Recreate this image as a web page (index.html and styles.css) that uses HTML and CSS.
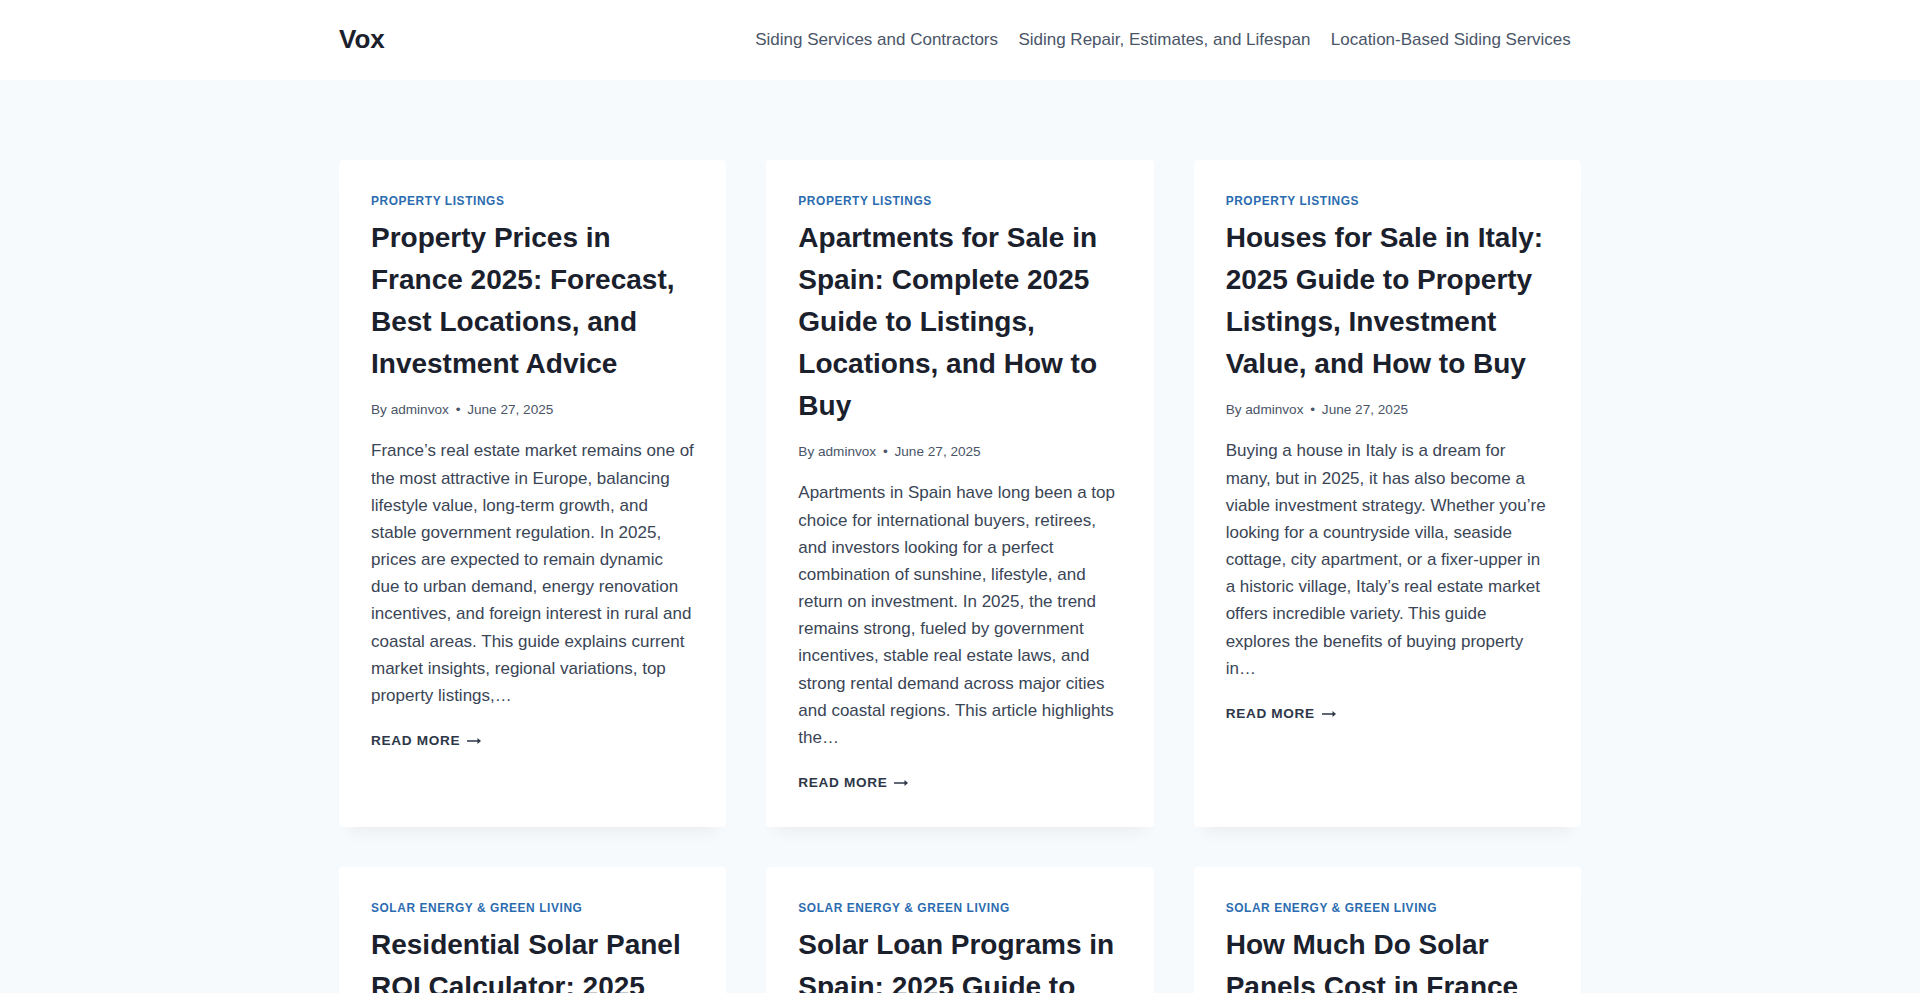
FILE: index.html
```html
<!DOCTYPE html>
<html lang="en">
<head>
<meta charset="utf-8">
<title>Vox</title>
<link rel="stylesheet" href="styles.css">
</head>
<body>
<header class="site-header">
  <div class="container header-inner">
    <a class="site-title" href="#">Vox</a>
    <nav class="main-nav">
      <a href="#">Siding Services and Contractors</a>
      <a href="#">Siding Repair, Estimates, and Lifespan</a>
      <a href="#">Location-Based Siding Services</a>
    </nav>
  </div>
</header>
<main class="site-main">
  <div class="container grid">
    <article class="card">
      <div class="cat"><a href="#">Property Listings</a></div>
      <h2 class="entry-title">Property Prices in France 2025: Forecast, Best Locations, and Investment Advice</h2>
      <div class="meta"><span>By <a href="#">adminvox</a></span><span class="sep">•</span><span>June 27, 2025</span></div>
      <p class="excerpt">France’s real estate market remains one of the most attractive in Europe, balancing lifestyle value, long-term growth, and stable government regulation. In 2025, prices are expected to remain dynamic due to urban demand, energy renovation incentives, and foreign interest in rural and coastal areas. This guide explains current market insights, regional variations, top property listings,…</p>
      <div class="more"><a href="#">Read More<svg class="arrow" viewBox="0 0 14 8" width="14" height="8"><path d="M0 3.3h10.5V1L14 4l-3.5 3V4.7H0z"/></svg></a></div>
    </article>
    <article class="card">
      <div class="cat"><a href="#">Property Listings</a></div>
      <h2 class="entry-title">Apartments for Sale in Spain: Complete 2025 Guide to Listings, Locations, and How to Buy</h2>
      <div class="meta"><span>By <a href="#">adminvox</a></span><span class="sep">•</span><span>June 27, 2025</span></div>
      <p class="excerpt">Apartments in Spain have long been a top choice for international buyers, retirees, and investors looking for a perfect combination of sunshine, lifestyle, and return on investment. In 2025, the trend remains strong, fueled by government incentives, stable real estate laws, and strong rental demand across major cities and coastal regions. This article highlights the…</p>
      <div class="more"><a href="#">Read More<svg class="arrow" viewBox="0 0 14 8" width="14" height="8"><path d="M0 3.3h10.5V1L14 4l-3.5 3V4.7H0z"/></svg></a></div>
    </article>
    <article class="card">
      <div class="cat"><a href="#">Property Listings</a></div>
      <h2 class="entry-title">Houses for Sale in Italy: 2025 Guide to Property Listings, Investment Value, and How to Buy</h2>
      <div class="meta"><span>By <a href="#">adminvox</a></span><span class="sep">•</span><span>June 27, 2025</span></div>
      <p class="excerpt">Buying a house in Italy is a dream for many, but in 2025, it has also become a viable investment strategy. Whether you’re looking for a countryside villa, seaside cottage, city apartment, or a fixer-upper in a historic village, Italy’s real estate market offers incredible variety. This guide explores the benefits of buying property in…</p>
      <div class="more"><a href="#">Read More<svg class="arrow" viewBox="0 0 14 8" width="14" height="8"><path d="M0 3.3h10.5V1L14 4l-3.5 3V4.7H0z"/></svg></a></div>
    </article>
    <article class="card">
      <div class="cat"><a href="#">Solar Energy &amp; Green Living</a></div>
      <h2 class="entry-title">Residential Solar Panel ROI Calculator: 2025 Guide to Savings and Payback</h2>
      <div class="meta"><span>By <a href="#">adminvox</a></span><span class="sep">•</span><span>June 27, 2025</span></div>
      <p class="excerpt">Installing solar panels at home is one of the smartest long-term investments you can make.</p>
    </article>
    <article class="card">
      <div class="cat"><a href="#">Solar Energy &amp; Green Living</a></div>
      <h2 class="entry-title">Solar Loan Programs in Spain: 2025 Guide to Financing Your Installation</h2>
      <div class="meta"><span>By <a href="#">adminvox</a></span><span class="sep">•</span><span>June 27, 2025</span></div>
      <p class="excerpt">Spain is one of the sunniest countries in Europe.</p>
    </article>
    <article class="card">
      <div class="cat"><a href="#">Solar Energy &amp; Green Living</a></div>
      <h2 class="entry-title">How Much Do Solar Panels Cost in France in 2025?</h2>
      <div class="meta"><span>By <a href="#">adminvox</a></span><span class="sep">•</span><span>June 27, 2025</span></div>
      <p class="excerpt">Solar energy is becoming more popular in France every year.</p>
    </article>
  </div>
</main>
</body>
</html>
```
FILE: styles.css
```css
* { box-sizing: border-box; }
html, body { margin: 0; padding: 0; }
body {
  background: #F7FAFC;
  font-family: "Liberation Sans", Arial, Helvetica, sans-serif;
  font-size: 17px;
  line-height: 1.6;
  color: #3A4556;
}
a { text-decoration: none; color: inherit; }

.container {
  max-width: 1290px;
  margin: 0 auto;
  padding: 0 24px;
}

.site-header { background: #fff; }
.header-inner {
  height: 80px;
  display: flex;
  align-items: center;
  justify-content: space-between;
}
.site-title {
  font-size: 26px;
  font-weight: 700;
  line-height: 1.2;
  color: #1A202C;
}
.main-nav { display: flex; }
.main-nav a {
  font-size: 17px;
  color: #4A5568;
  padding: 0.6em 0.6em;
  line-height: 1.6;
}

.site-main { padding-top: 80px; padding-bottom: 80px; }
.grid {
  display: grid;
  grid-template-columns: repeat(3, 1fr);
  column-gap: 40px;
  row-gap: 40px;
}
.card {
  background: #fff;
  border-radius: 4px;
  box-shadow: 0 15px 15px -10px rgba(0, 0, 0, 0.05);
  padding: 32px 32px 32px;
}
.cat {
  font-size: 11.9px;
  font-weight: 700;
  letter-spacing: 0.05em;
  text-transform: uppercase;
  line-height: 1.6;
  margin-bottom: 0.5em;
}
.cat a { color: #2B6CB0; }
.entry-title {
  margin: 0;
  font-size: 28px;
  line-height: 1.5;
  font-weight: 700;
  color: #1A202C;
}
.meta {
  font-size: 13.6px;
  color: #4A5568;
  margin: 13.6px 0 17px;
  line-height: 1.6;
  display: flex;
  align-items: center;
}
.meta .sep {
  padding: 0 0.5em;
}
.excerpt { margin: 0 0 17px; color: #3A4556; }
.more { line-height: 1.6; }
.more a {
  display: inline-flex;
  align-items: center;
  font-size: 13.6px;
  font-weight: 700;
  letter-spacing: 0.05em;
  text-transform: uppercase;
  color: #2D3748;
}
.arrow {
  margin-left: 0.5em;
  fill: #2D3748;
}
```
